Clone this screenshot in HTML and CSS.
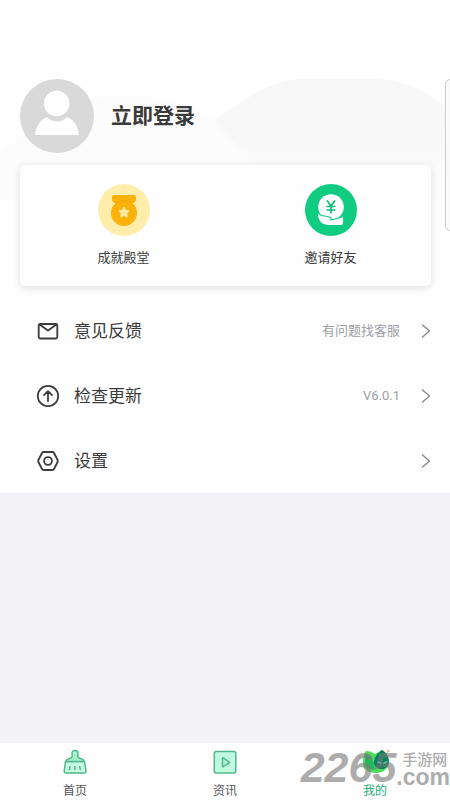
FILE: index.html
```html
<!DOCTYPE html>
<html lang="zh-CN">
<head>
<meta charset="utf-8">
<meta name="viewport" content="width=device-width, initial-scale=1">
<title>我的</title>
<link rel="stylesheet" href="styles.css">
</head>
<body>
<main class="page">
  <section class="profile">
    <svg class="hills" viewBox="0 0 450 120" preserveAspectRatio="none" aria-hidden="true">
      <defs>
        <linearGradient id="mist" x1="0" y1="0" x2="0" y2="1">
          <stop offset="0.450" stop-color="#f8f8f8"/>
          <stop offset="0.800" stop-color="#fcfcfc"/>
        </linearGradient>
      </defs>
      <path d="M0 74C30 50 75 16 125 16C165 16 195 30 216 42L260 80V120H0Z" fill="#fcfcfc"/>
      <path d="M214 42C245 18 275 0 304 0H374C405 0 430 14 450 31V120H290C262 90 235 66 214 42Z" fill="url(#mist)"/>
    </svg>
    <button class="login" type="button">
      <svg class="avatar" viewBox="0 0 74 74" aria-hidden="true">
        <circle cx="37" cy="37" r="37" fill="#d9d9d9"/>
        <circle cx="36.700" cy="24.500" r="12.700" fill="#fff"/>
        <path d="M15 56C16 47 20 41 27 38C33 44 41 44 47 38C54 41 58 47 59 56Z" fill="#fff"/>
      </svg>
      <span class="login-text">立即登录</span>
    </button>
    <div class="card">
      <button class="feature" type="button">
        <svg class="feature-icon" viewBox="0 0 54 54" aria-hidden="true">
          <circle cx="27" cy="27" r="26" fill="#ffedab"/>
          <path d="M17 12H37Q39 12 39 14V17Q39 18 36 20.500A13 13 0 1 1 18 20.500Q15 18 15 17V14Q15 12 17 12Z" fill="#fcb20a"/>
          <path d="M19 19Q27 16 35 19" fill="none" stroke="#f5a800" stroke-width="1.500"/>
          <path d="M27 24L28.700 27.300L32.300 27.900L29.800 30.500L30.300 34.100L27 32.500L23.700 34.100L24.200 30.500L21.700 27.900L25.300 27.300Z" fill="#ffe9a0" stroke="#ffe9a0" stroke-linejoin="round"/>
        </svg>
        <span>成就殿堂</span>
      </button>
      <button class="feature" type="button">
        <svg class="feature-icon" viewBox="0 0 54 54" aria-hidden="true">
          <circle cx="27" cy="27" r="26" fill="#0fcc80"/>
          <circle cx="27" cy="24" r="12.800" fill="#fff"/>
          <path d="M13.500 31Q14.500 29.800 16 31.500C18 34 22 32 26 34.500Q28 35 26.500 37Q33 36 37.500 34Q40 33 39.700 36V40Q39.500 42.500 37 42.500H24C17 42.500 13 37 13.500 31Z" fill="#fff" stroke="#0fcc80" stroke-width="1.200" stroke-linejoin="round"/>
          <path d="M23 17.500L27 23L31 17.500M27 23V30.500M22.500 23.500H31.500M22.500 27H31.500" fill="none" stroke="#0fbd75" stroke-width="1.700"/>
        </svg>
        <span>邀请好友</span>
      </button>
    </div>
  </section>

  <ul class="menu">
    <li><a class="row" href="#feedback">
      <svg class="row-icon" viewBox="0 0 24 24" aria-hidden="true"><rect x="2.700" y="5" width="18.600" height="14.500" rx="1.500"/><path d="M3.500 5.500L12 11.500L20.500 5.500"/></svg>
      <span class="row-title">意见反馈</span>
      <span class="row-hint">有问题找客服</span>
      <svg class="chevron" viewBox="0 0 10 16" aria-hidden="true"><path d="M1.500 2L8.500 8L1.500 14"/></svg>
    </a></li>
    <li><a class="row" href="#update">
      <svg class="row-icon" viewBox="0 0 24 24" aria-hidden="true"><circle cx="12" cy="12" r="10.200"/><path d="M12 17V7.500M8 11.200L12 7.200L16 11.200"/></svg>
      <span class="row-title">检查更新</span>
      <span class="row-hint">V6.0.1</span>
      <svg class="chevron" viewBox="0 0 10 16" aria-hidden="true"><path d="M1.500 2L8.500 8L1.500 14"/></svg>
    </a></li>
    <li><a class="row" href="#settings">
      <svg class="row-icon" viewBox="0 0 24 24" aria-hidden="true"><path d="M7.500 3H16.500Q17.500 3 18 4L21.600 11Q22.100 12 21.600 13L18 20Q17.500 21 16.500 21H7.500Q6.500 21 6 20L2.400 13Q1.900 12 2.400 11L6 4Q6.500 3 7.500 3Z"/><circle cx="12" cy="12" r="3.900"/></svg>
      <span class="row-title">设置</span>
      <svg class="chevron" viewBox="0 0 10 16" aria-hidden="true"><path d="M1.500 2L8.500 8L1.500 14"/></svg>
    </a></li>
  </ul>
  <div class="edge-handle"></div>
</main>

<nav class="tabs">
  <a class="tab" href="#home">
    <svg class="tab-icon" viewBox="0 0 26 26" aria-hidden="true">
      <path d="M3.500 12.500H22.500L24 22Q24 24 22 24H4Q2 24 2.200 22Z" fill="#c9fbe2" stroke="#4fb88b" stroke-width="1.500" stroke-linejoin="round"/>
      <path d="M4 12.500Q4 10.500 6 10L9 9Q11 8 10 5Q9.500 1.500 13 1.500Q16.500 1.500 16 5Q15 8 17 9L20 10Q22 10.500 22 12.500Z" fill="#a7f2cd" stroke="#4fb88b" stroke-width="1.500" stroke-linejoin="round"/>
      <path d="M8 17L7.500 21M13 17V21M17.500 17L18.500 21" fill="none" stroke="#4fb88b" stroke-width="1.500"/>
    </svg>
    <span>首页</span>
  </a>
  <a class="tab" href="#news">
    <svg class="tab-icon" viewBox="0 0 26 26" aria-hidden="true">
      <rect x="2.300" y="2.500" width="21.500" height="21.500" rx="2" fill="#c0f9df" stroke="#4fb88b" stroke-width="1.500"/>
      <path d="M10.500 9.200V17.400Q10.500 18 11.200 17.700L17.200 14Q17.800 13.500 17.200 13L11.200 9Q10.500 8.600 10.500 9.200Z" fill="#b0f4d3" stroke="#4fb88b" stroke-width="1.500"/>
    </svg>
    <span>资讯</span>
  </a>
  <a class="tab active" href="#mine" aria-current="page">
    <svg class="tab-icon wide" viewBox="0 0 38 26" aria-hidden="true">
      <path d="M10 2C14 2 16 3 19 5C22 3 24 2 26 1C31 4 33 9 33 14C32 20 27 24 20 24C12 24 7 20 7 13C7 8 8 4 10 2Z" fill="#4fdc5c"/>
      <path d="M10 5C15 7 18 11 19 21C13 21 9 17 9 11Z" fill="#22b85c"/>
      <path d="M26 1C31 4 33 9 33 14C32 18 29 20 25 20C21 20 18 17 18 13C18 8 22 4 26 1Z" fill="#00825c"/>
      <path d="M22 13L25 14M28 14L31 13" stroke="#7be8bd" stroke-width="1.500" stroke-linecap="round"/>
      <circle cx="32" cy="2" r="1.600" fill="#e7c994"/><circle cx="4" cy="8" r="1.200" fill="#ecd5b0"/>
    </svg>
    <span>我的</span>
  </a>
  <div class="watermark">
    <span class="mark-number">2265</span>
    <span class="mark-side"><span class="mark-name">手游网</span><span class="mark-domain">.com</span></span>
  </div>
</nav>
</body>
</html>
```
FILE: styles.css
```css
* { box-sizing: border-box; }

body {
  margin: 0;
  min-height: 100vh;
  display: flex;
  flex-direction: column;
  background: #f4f4f8;
  color: #3a3a3a;
  font-family: Roboto, "Noto Sans CJK SC", sans-serif;
}

button {
  border: 0;
  padding: 0;
  background: none;
  color: inherit;
  font: inherit;
  cursor: pointer;
}

a { color: inherit; text-decoration: none; }

.page { position: relative; flex: 1; overflow: hidden; }

.profile {
  position: relative;
  padding: 79px 19px 12px 20px;
  background: #fefefe;
}

.hills {
  position: absolute;
  left: 0;
  top: 79px;
  width: 100%;
  height: 120px;
}

.login {
  position: relative;
  display: flex;
  align-items: center;
  gap: 17px;
}

.avatar { width: 74px; height: 74px; }

.login-text { font-size: 21px; font-weight: 700; line-height: 30px; }

.card {
  position: relative;
  display: grid;
  grid-template-columns: 1fr 1fr;
  gap: 6px;
  margin-top: 12px;
  padding: 18px 0 18px 3px;
  border-radius: 6px;
  background: #fefefe;
  box-shadow: 0 2px 8px rgba(0, 0, 0, 0.12);
}

.feature {
  display: flex;
  flex-direction: column;
  align-items: center;
  gap: 11px;
  font-size: 13px;
  line-height: 20px;
}

.feature-icon { width: 54px; height: 54px; }

.menu {
  margin: 0;
  padding: 0;
  list-style: none;
  background: #fefefe;
}

.row {
  display: flex;
  align-items: center;
  height: 65px;
  padding: 0 19px 0 36px;
}

.row-icon {
  width: 24px;
  height: 24px;
  margin-right: 14px;
  fill: none;
  stroke: #3b3b40;
  stroke-width: 1.8;
  stroke-linecap: round;
  stroke-linejoin: round;
}

.row-title { flex: 1; font-size: 17px; line-height: 24px; }

.row-hint { color: #9c9fa3; font-size: 13px; line-height: 18px; }

.chevron {
  width: 10px;
  height: 16px;
  margin-left: 21px;
  fill: none;
  stroke: #8c8c8c;
  stroke-width: 1.5;
  stroke-linecap: round;
  stroke-linejoin: round;
}

.edge-handle {
  position: absolute;
  top: 79px;
  right: -6px;
  width: 11px;
  height: 152px;
  border: 1px solid #ccc;
  border-radius: 6px;
  background: #fafafa;
}

.tabs {
  position: relative;
  display: grid;
  grid-template-columns: repeat(3, 1fr);
  padding: 6px 0 0;
  background: #fefefe;
}

.tab {
  display: flex;
  flex-direction: column;
  align-items: center;
  gap: 8px;
  color: #555;
  font-size: 12px;
  line-height: 17px;
}

.tab.active { color: #20aa7b; }

.tab-icon { width: 26px; height: 26px; }

.tab-icon.wide { width: 38px; }

.watermark {
  position: absolute;
  right: 0;
  top: 7px;
  display: flex;
  color: #777;
  font-family: "Liberation Sans", "Noto Sans CJK SC", sans-serif;
  font-weight: 700;
  opacity: 0.6;
  pointer-events: none;
}

.mark-number { font-size: 43px; font-style: italic; line-height: 34px; }

.mark-side { display: flex; flex-direction: column; }

.mark-name {
  padding-left: 6px;
  font-size: 15px;
  font-weight: 500;
  line-height: 20px;
}

.mark-domain { font-size: 23px; line-height: 14px; }
```
